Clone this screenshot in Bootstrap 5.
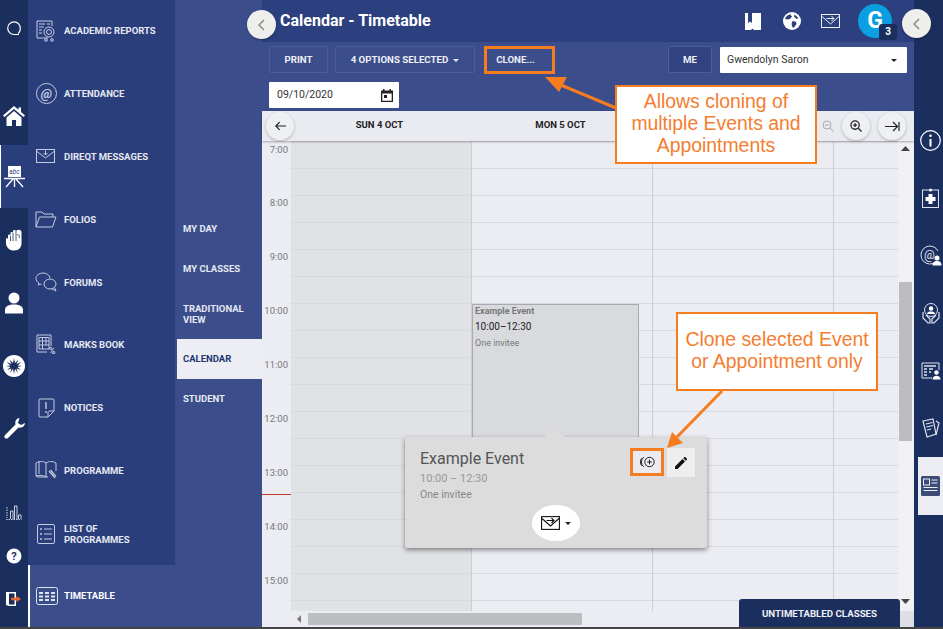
<!DOCTYPE html>
<html lang="en">
<head>
    <meta charset="UTF-8">
    <meta name="viewport" content="width=device-width, initial-scale=1.0">
    <title>Calendar - Timetable</title>
    <link href="https://cdn.jsdelivr.net/npm/bootstrap@5.3.3/dist/css/bootstrap.min.css" rel="stylesheet">
    <style>
        html, body { height: 100%; overflow: hidden; }
        body { font-family: Roboto, "Liberation Sans", sans-serif; background: #454545; }
        .app { position: relative; width: 943px; height: 627px; overflow: hidden; }

        .rail-left { width: 28px; background: #1b2f5f; }
        .rail-item { height: 63px; color: #fff; }
        .rail-item.on { background: #2b3e7c; border-left: 1px solid #fff; }
        .rail-mini { height: 43px; }
        .rail-mini.end { margin-bottom: 7px; }
        .rail-top { height: 82px; padding-bottom: 24px; }
        .rail-home { height: 63px; padding-top: 4px; }

        .side-wrap { width: 234px; }
        .menu-main { width: 147px; background: #2b3e7c; box-shadow: 2px 0 3px rgba(20, 30, 70, .25); }
        .menu-item { height: 62.8px; padding-bottom: 1px; color: #e6e9f2; font-size: 9.5px; font-weight: 700; line-height: 11px; text-transform: uppercase; }
        .menu-item.two-line { padding-bottom: 0; }
        .menu-icon { width: 36px; }
        .menu-sub { width: 87px; background: #3b4e8b; padding-top: 208px; }
        .sub-item { height: 40px; padding-left: 8px; color: #e6e9f2; font-size: 9.5px; font-weight: 700; line-height: 11px; }
        .sub-item.tall { height: 51px; }
        .sub-item.lift { padding-bottom: 2px; }
        .sub-item.on { background: #eceef4; color: #24366f; margin-left: 2px; padding-left: 6px; }
        .menu-time { height: 62px; background: #3b4e8b; border-left: 2px solid #fff; color: #fff; font-size: 9.5px; font-weight: 700; }
        .menu-time .menu-icon { width: 34px; }

        .page-main { width: 652px; background: #3b4e8b; }
        .title-bar { height: 42px; background: #2c3f7e; padding-left: 18px; padding-right: 22px; }
        .title-bar h1 { font-size: 16px; font-weight: 700; color: #fff; margin: 0; }
        .top-icon { width: 39px; }
        .avatar { position: relative; width: 34px; height: 34px; margin-left: 8px; border-radius: 50%; background: #0a9fe0; color: #fff; font-size: 23px; font-weight: 700; line-height: 34px; text-align: center; }
        .avatar-num { position: absolute; right: -5px; bottom: -2px; width: 18px; height: 16px; border-radius: 3px; background: #1b2f5f; font-size: 10px; line-height: 16px; }

        .tool-bar { height: 69px; padding: 4px 7px 0; }
        .tool-btn { flex-shrink: 0; height: 27px; width: 59px; padding: 0; border: 1px solid #4c5e98; border-radius: 2px; color: #eef0f6; font-size: 9.7px; font-weight: 700; line-height: 26px; background: transparent; }
        .tool-btn.caret-btn { width: 140px; margin-left: 7px; }
        .clone-btn { width: 71px; height: 28px; margin-left: 9px; padding-right: 8px; border: 3px solid #f57c1f; border-radius: 0; line-height: 20px; }
        .me-btn { width: 44px; margin-right: 8px; background: #30437f; }
        .caret-down { display: inline-block; margin-left: 5px; border-top: 3px solid currentColor; border-left: 3px solid transparent; border-right: 3px solid transparent; vertical-align: 1px; }
        .who-box { flex-shrink: 0; width: 187px; height: 26px; margin-top: 1px; padding: 0 10px 0 7px; background: #fff; font-size: 10.5px; color: #333; border-radius: 1px; }
        .date-box { width: 130px; height: 26px; margin-top: 8px; padding: 0 6px 0 8px; background: #fff; font-size: 10.5px; color: #333; border-radius: 1px; }

        .cal-head { height: 30px; padding-bottom: 2px; background: #e9ebf1; box-shadow: 0 1px 2px rgba(0, 0, 0, .3); font-size: 9.5px; font-weight: 700; color: #222; position: relative; z-index: 2; }
        .cal-gutter { width: 27px; }
        .cal-day { width: 181px; text-align: center; }
        .round-btn { position: absolute; top: 1px; width: 28px; height: 28px; border-radius: 50%; background: #eef0f4; box-shadow: 0 1px 3px rgba(0, 0, 0, .25); }
        .cal-body { height: 470px; position: relative; overflow: hidden; background: #ecedf3; }
        .time-col { flex-shrink: 0; width: 29px; color: #777; font-size: 9.5px; text-align: right; padding-right: 3px; }
        .time-slot { height: 54px; padding-top: 1px; }
        .time-slot:first-child { padding-top: 2px; }
        .day-col { flex-shrink: 0; width: 181px; border-right: 1px solid #ccced5; background-image: repeating-linear-gradient(to bottom, #d8d9e0 0, #d8d9e0 1px, transparent 1px, transparent 27px); position: relative; }
        .day-col.off { background-color: #e1e2e6; }
        .day-col.last { width: 64px; border-right: 0; }
        .v-scroll { flex-shrink: 0; width: 16px; background: #f1f1f3; position: relative; }
        .v-thumb { position: absolute; left: 1px; top: 141px; width: 13px; height: 159px; background: #bdbdbf; }
        .cal-event { position: absolute; left: 0; top: 163px; width: 167px; height: 160px; padding: 1px 2px; background: #d9dade; border: 1px solid #a9aab0; font-size: 9px; color: #777; }
        .cal-event b { font-weight: 700; display: block; line-height: 11px; }
        .cal-event span { display: block; color: #222; font-size: 10px; line-height: 20px; }
        .now-tick { position: absolute; left: 0; top: 353px; width: 29px; height: 1px; background: #c0392b; }
        .h-scroll { height: 16px; background: #ecedf3; padding-left: 35px; }
        .h-thumb { width: 274px; height: 12px; margin-left: 7px; background: #bdbec1; }
        .tri-left { border-right: 4px solid #777; border-top: 4px solid transparent; border-bottom: 4px solid transparent; }

        .rail-right { width: 29px; background: #1b2f5f; padding-top: 112px; }
        .rail-r-item { height: 57.5px; margin-left: 4px; }
        .rail-r-item.on { background: #eceef4; }

        .unt-tab { position: absolute; left: 739px; top: 599px; width: 161px; height: 28px; background: #1b2f5f; border-radius: 3px 3px 0 0; color: #eef0f6; font-size: 9.7px; font-weight: 700; line-height: 30px; text-align: center; }
        .unt-fill { position: absolute; left: 900px; top: 611px; width: 14px; height: 16px; background: #dedfe4; }
        .circle-back { position: absolute; z-index: 3; top: 10px; width: 29px; height: 29px; border-radius: 50%; background: #eeeeec; box-shadow: 0 1px 2px rgba(0, 0, 0, .3); }

        .pop-card { position: absolute; z-index: 3; left: 405px; top: 437px; width: 302px; height: 111px; background: #dcdcdc; border-radius: 2px; box-shadow: 0 2px 5px rgba(0, 0, 0, .45); padding: 11px 15px; color: #555; }
        .pop-card::before { content: ""; position: absolute; left: 142px; top: -7px; width: 15px; height: 15px; background: #dcdcdc; transform: rotate(45deg); }
        .pop-title { position: relative; font-size: 16px; line-height: 22px; color: #555; }
        .pop-time { font-size: 11px; line-height: 18px; color: #999; }
        .pop-invite { font-size: 10.5px; line-height: 13px; color: #888; }
        .pop-tools { position: absolute; right: 12px; top: 11px; }
        .clone-one { width: 34px; height: 28px; background: #e9ebf1; border: 3px solid #f57c1f; margin-right: 3px; }
        .edit-one { width: 28px; height: 29px; background: #eeeeee; }
        .mail-pill { position: absolute; left: 127px; top: 68px; width: 48px; height: 36px; border-radius: 50%; background: #fff; color: #222; }

        .note-box { position: absolute; z-index: 5; width: 202px; height: 79px; padding-bottom: 3px; background: #fff; border: 2px solid #f57c1f; color: #f47d30; font-family: "Liberation Sans", Arial, sans-serif; font-size: 19.4px; line-height: 22px; text-align: center; }
        .note-a { left: 615px; top: 85px; }
        .note-b { left: 676px; top: 312px; }
        .note-arrows { position: absolute; z-index: 4; left: 0; top: 0; }
    </style>
</head>
<body>
<div class="app d-flex">

    <!-- left icon rail -->
    <div class="rail-left d-flex flex-column flex-shrink-0">
        <div class="rail-item rail-top d-flex align-items-center justify-content-center">
            <svg width="16" height="16" viewBox="0 0 16 16" fill="none" stroke="#fff" stroke-width="1.2"><path d="M13 13.5H8A6.3 6.3 0 1 1 14.300 7.500C14.300 10 13.500 11.500 12 12.500"/></svg>
        </div>
        <div class="rail-item rail-home d-flex align-items-center justify-content-center">
            <svg width="22" height="20" viewBox="0 0 22 20" fill="#fff"><path d="M11 0 0 9.500 1.500 11 11 3 20.500 11 22 9.500 18 6V1.500H15.500V3.800ZM3.500 11.500V20H9V14H13V20H18.500V11.500L11 5Z"/></svg>
        </div>
        <div class="rail-item on d-flex align-items-center justify-content-center">
            <svg width="22" height="22" viewBox="0 0 22 22"><rect x="4" y="0" width="13" height="11" fill="#fff"/><text x="10.500" y="8" text-anchor="middle" font-size="6.500" font-style="italic" font-family="Roboto" fill="#2b3e7c">abc</text><path d="M0 12.500H21M10.500 13V21M9 13 2 21M12 13 19 21" stroke="#fff" stroke-width="1.300"/></svg>
        </div>
        <div class="rail-item d-flex align-items-center justify-content-center">
            <svg width="18" height="22" viewBox="0 0 18 22" fill="#fff"><path d="M1 11C.5 9 2 8 3 10V7C3 5 5 5 5.500 7V4C5.500 2.500 7.500 2.500 8 4V2C8 .5 10.500 .5 11 2L11.500 1.500C13.500 0 16 1 16.500 3V13C17 18 14 21.500 9 21.500 4.500 21.500 2 19 1 15Z"/><path d="M5.500 7V12M8 4V12M11 2V12M12 6C14 5 15 7 14 9" fill="none" stroke="#1b2f5f" stroke-width=".8"/></svg>
        </div>
        <div class="rail-item d-flex align-items-center justify-content-center">
            <svg width="18" height="22" viewBox="0 0 18 22" fill="#fff"><circle cx="9" cy="6" r="5.500"/><path d="M0 21.500V18C0 14 4 12.500 9 12.500S18 14 18 18V21.500Z"/></svg>
        </div>
        <div class="rail-item d-flex align-items-center justify-content-center">
            <svg width="22" height="22" viewBox="0 0 22 22"><circle cx="11" cy="11" r="11" fill="#fff"/><path d="M11 3 12 8 15.500 4.500 13.500 9 18.500 7 14.500 10.500 19 11 14.500 12 18 15 13.500 13.500 15 18 12 14 11 19 10 14 7 18 8.500 13.500 4 15 7.500 12 3 11 7.500 10.500 3.500 7 8.500 9 6.500 4.500 10 8Z" fill="#1b2f5f"/></svg>
        </div>
        <div class="rail-item d-flex align-items-center justify-content-center">
            <svg width="21" height="21" viewBox="0 0 21 21" fill="#fff"><path d="M15.500 0C12.500.2 10.500 3 11.500 6.500L.8 17.200C-.5 19.500 1.500 21.500 3.800 20.200L14.500 9.500C18 10.500 21 8 21 5L17 7 14 5Z"/></svg>
        </div>
        <div class="mt-auto"></div>
        <div class="rail-mini d-flex align-items-center justify-content-center">
            <svg width="16" height="15" viewBox="0 0 16 15" fill="none" stroke="#dfe3ee" stroke-width=".9"><path d="M0 14.500H15.500M1 2V13" stroke-dasharray="1.500 1"/><path d="M4.500 14V6H7V14M8.500 14V1H11V14M12.500 14V10H15V14"/></svg>
        </div>
        <div class="rail-mini d-flex align-items-center justify-content-center">
            <svg width="16" height="16" viewBox="0 0 16 16"><circle cx="8" cy="8" r="7.500" fill="#fff"/><text x="8" y="12" text-anchor="middle" font-size="11" font-weight="700" font-family="Roboto" fill="#1b2f5f">?</text></svg>
        </div>
        <div class="rail-mini end d-flex align-items-center justify-content-center">
            <svg width="16" height="16" viewBox="0 0 16 16"><path d="M0 1H10V15H3L0 14Z" fill="#fff"/><rect x="3" y="2.500" width="5.500" height="11" fill="#1b2f5f"/><path d="M5 6.800H10.500V5L15 8 10.500 11V9.200H5Z" fill="#e8662a"/></svg>
        </div>
    </div>

    <!-- menus -->
    <div class="side-wrap d-flex flex-column flex-shrink-0">
        <div class="d-flex flex-grow-1">
            <div class="menu-main">
                <div class="menu-item d-flex align-items-center">
                    <div class="menu-icon d-flex justify-content-center">
                        <svg width="21" height="22" viewBox="0 0 21 22" fill="none" stroke="#c4cbdf"><path d="M12 18H1V1H16V6"/><path d="M3 4H9M11 4H14M3 7H8M3 10H6M3 13H6"/><circle cx="13" cy="12" r="5"/><circle cx="13" cy="12" r="2.500"/><circle cx="10" cy="20" r="1.300"/><circle cx="16" cy="20" r="1.300"/></svg>
                    </div>
                    <span>Academic Reports</span>
                </div>
                <div class="menu-item d-flex align-items-center">
                    <div class="menu-icon d-flex justify-content-center">
                        <svg width="21" height="21" viewBox="0 0 21 21" fill="none" stroke="#c4cbdf"><circle cx="10.500" cy="10.500" r="10"/><text x="10.500" y="15" text-anchor="middle" font-size="13" font-style="italic" font-family="Roboto" fill="#c4cbdf" stroke="none">@</text></svg>
                    </div>
                    <span>Attendance</span>
                </div>
                <div class="menu-item d-flex align-items-center">
                    <div class="menu-icon d-flex justify-content-center">
                        <svg width="20" height="15" viewBox="0 0 20 15" fill="none" stroke="#c4cbdf"><rect x=".5" y=".5" width="18" height="13"/><path d="M1 2.500 9.500 9 18 2.500M9.500 1.500V6M7.500 4 9.500 6 11.500 4"/></svg>
                    </div>
                    <span>Direqt Messages</span>
                </div>
                <div class="menu-item d-flex align-items-center">
                    <div class="menu-icon d-flex justify-content-center">
                        <svg width="22" height="17" viewBox="0 0 22 17" fill="none" stroke="#c4cbdf"><path d="M1 16V1H7L9 3H18V6"/><path d="M1 16 4.500 6H21L17.500 16Z"/></svg>
                    </div>
                    <span>Folios</span>
                </div>
                <div class="menu-item d-flex align-items-center">
                    <div class="menu-icon d-flex justify-content-center">
                        <svg width="22" height="20" viewBox="0 0 22 20" fill="none" stroke="#c4cbdf"><path d="M8 1C4 1 1 3.500 1 6.500 1 8.500 2 10 4 11L3 13 6.500 12"/><path d="M8 1C11.500 1 14.500 3 15 6"/><ellipse cx="15" cy="12" rx="6" ry="5"/><path d="M17 17 21 19 19.500 15.500"/></svg>
                    </div>
                    <span>Forums</span>
                </div>
                <div class="menu-item d-flex align-items-center">
                    <div class="menu-icon d-flex justify-content-center">
                        <svg width="21" height="21" viewBox="0 0 21 21" fill="none" stroke="#c4cbdf"><path d="M15 12V1H1V18H11"/><path d="M3 3.500H13V15H3ZM3 7H13M3 11H13M6.500 3.500V15M10 3.500V11"/><text x="16" y="20" text-anchor="middle" font-size="9" font-family="Roboto" font-weight="700" fill="#c4cbdf" stroke="none">%</text></svg>
                    </div>
                    <span>Marks Book</span>
                </div>
                <div class="menu-item d-flex align-items-center">
                    <div class="menu-icon d-flex justify-content-center">
                        <svg width="17" height="20" viewBox="0 0 17 20" fill="none" stroke="#c4cbdf"><path d="M10 19H2C1.200 19 1 18.500 1 18V2C1 1.200 1.500 1 2 1H15C15.700 1 16 1.500 16 2V13L10 19V14.500C10 13.500 11 13 12 13H16"/><path d="M8 4V11M8 13V15" stroke-width="1.400"/></svg>
                    </div>
                    <span>Notices</span>
                </div>
                <div class="menu-item d-flex align-items-center">
                    <div class="menu-icon d-flex justify-content-center">
                        <svg width="22" height="20" viewBox="0 0 22 20" fill="none" stroke="#c4cbdf"><path d="M11 17C8 15 5 15 1 16V3C5 1 8 1 11 3 14 1 17 1 21 3V11"/><path d="M11 3V17M4 1V14M1 16 3 17H13"/><path d="M14 11 20 18M15.500 10 21 16.500" stroke-width="1.200"/></svg>
                    </div>
                    <span>Programme</span>
                </div>
                <div class="menu-item two-line d-flex align-items-center">
                    <div class="menu-icon d-flex justify-content-center">
                        <svg width="18" height="20" viewBox="0 0 18 20" fill="none" stroke="#c4cbdf"><rect x=".5" y=".5" width="17" height="19" rx="1.500"/><path d="M7 5H15M7 10H15M7 15H15"/><path d="M3 5H5M3 10H5M3 15H5" stroke-width="1.500"/></svg>
                    </div>
                    <span>List of<br>Programmes</span>
                </div>
            </div>
            <div class="menu-sub flex-grow-1">
                <div class="sub-item d-flex align-items-center">MY DAY</div>
                <div class="sub-item d-flex align-items-center">MY CLASSES</div>
                <div class="sub-item tall d-flex align-items-center">TRADITIONAL<br>VIEW</div>
                <div class="sub-item lift on d-flex align-items-center">CALENDAR</div>
                <div class="sub-item lift d-flex align-items-center">STUDENT</div>
            </div>
        </div>
        <div class="menu-time d-flex align-items-center">
            <div class="menu-icon d-flex justify-content-center">
                <svg width="22" height="18" viewBox="0 0 22 18" fill="none" stroke="#dfe3ee"><rect x=".5" y=".5" width="21" height="17" rx="2"/><path d="M3 6H7M9 6H13M15 6H19M3 9.500H7M9 9.500H13M15 9.500H19M3 13H7M9 13H13M15 13H19" stroke-width="2"/></svg>
            </div>
            <span>TIMETABLE</span>
        </div>
    </div>

    <!-- page -->
    <div class="page-main d-flex flex-column flex-shrink-0">
        <div class="title-bar d-flex align-items-center">
            <h1>Calendar - Timetable</h1>
            <div class="top-icon d-flex justify-content-center ms-auto">
                <svg width="16" height="17" viewBox="0 0 16 17" fill="#fff"><path d="M0 0H16V17H9L7.500 15.500 6 17H0ZM3 0V10L5 8.500 7 10V0Z" fill-rule="evenodd"/></svg>
            </div>
            <div class="top-icon d-flex justify-content-center">
                <svg width="18" height="18" viewBox="0 0 18 18"><circle cx="9" cy="9" r="9" fill="#fff"/><path d="M7 2.200 9 4.500 7 7 3.500 7.500 2 6.500C3 4.500 5 2.800 7 2.200ZM9.500 9 13 9.800 13.500 12 11 15.500H9.500L8.500 12ZM11.500 2.500 15.500 6 13.500 7 11 4.500Z" fill="#2c3f7e"/></svg>
            </div>
            <div class="top-icon d-flex justify-content-center">
                <svg width="19" height="14" viewBox="0 0 19 14" fill="none" stroke="#eef0f6"><rect x=".5" y=".5" width="18" height="13"/><path d="M1 2.500 9.500 10 18 2.500M5.500 4.500H13M10.500 2 13 4.500 10.500 7"/></svg>
            </div>
            <div class="avatar">G<div class="avatar-num">3</div></div>
        </div>
        <div class="tool-bar">
            <div class="d-flex">
                <button type="button" class="btn tool-btn">PRINT</button>
                <button type="button" class="btn tool-btn caret-btn">4 OPTIONS SELECTED<span class="caret-down"></span></button>
                <button type="button" class="btn tool-btn clone-btn">CLONE...</button>
                <button type="button" class="btn tool-btn me-btn ms-auto">ME</button>
                <div class="who-box d-flex align-items-center justify-content-between">Gwendolyn Saron<span class="caret-down text-dark"></span></div>
            </div>
            <div class="date-box d-flex align-items-center justify-content-between">09/10/2020
                <svg width="12" height="13" viewBox="0 0 12 13" fill="#222"><path d="M2 0H3.500V1.500H8.500V0H10V1.500H12V13H0V1.500H2ZM1.300 4.500V11.700H10.700V4.500Z" fill-rule="evenodd"/><rect x="3" y="6" width="3" height="3"/></svg>
            </div>
        </div>
        <div class="cal-head d-flex align-items-center">
            <div class="cal-gutter"></div>
            <div class="cal-day">SUN 4 OCT</div>
            <div class="cal-day">MON 5 OCT</div>
            <div class="round-btn d-flex align-items-center justify-content-center" style="left:4px">
                <svg width="11" height="10" viewBox="0 0 13 11" fill="none" stroke="#222" stroke-width="1.400"><path d="M13 5.500H1M5.500 1 1 5.500 5.500 10"/></svg>
            </div>
            <svg class="position-absolute" style="left:560px;top:9px" width="12" height="12" viewBox="0 0 12 12" fill="none" stroke="#aaa"><circle cx="5" cy="5" r="4"/><path d="M3 5H7M8 8 11.500 11.500" /></svg>
            <div class="round-btn d-flex align-items-center justify-content-center" style="left:580px">
                <svg width="12" height="12" viewBox="0 0 13 13" fill="none" stroke="#222" stroke-width="1.400"><circle cx="5.500" cy="5.500" r="4.500"/><path d="M3.500 5.500H7.500M5.500 3.500V7.500M9 9 12.500 12.500"/></svg>
            </div>
            <div class="round-btn d-flex align-items-center justify-content-center" style="left:616px">
                <svg width="15" height="11" viewBox="0 0 15 11" fill="none" stroke="#222" stroke-width="1.200"><path d="M0 5.500H12M8 1 12.500 5.500 8 10M14 1V10"/></svg>
            </div>
        </div>
        <div class="cal-body d-flex">
            <div class="time-col">
                <div class="time-slot">7:00</div><div class="time-slot">8:00</div><div class="time-slot">9:00</div><div class="time-slot">10:00</div><div class="time-slot">11:00</div><div class="time-slot">12:00</div><div class="time-slot">13:00</div><div class="time-slot">14:00</div><div class="time-slot">15:00</div>
            </div>
            <div class="day-col off"></div>
            <div class="day-col">
                <div class="cal-event"><b>Example Event</b><span>10:00–12:30</span>One invitee</div>
            </div>
            <div class="day-col"></div>
            <div class="day-col last"></div>
            <div class="v-scroll">
                <svg class="position-absolute" style="left:3px;top:5px" width="9" height="5" viewBox="0 0 9 5"><path d="M0 5 4.500 0 9 5Z" fill="#444"/></svg>
                <div class="v-thumb"></div>
                <svg class="position-absolute" style="left:3px;bottom:7px" width="9" height="5" viewBox="0 0 9 5"><path d="M0 0 4.500 5 9 0Z" fill="#444"/></svg>
            </div>
            <div class="now-tick"></div>
        </div>
        <div class="h-scroll d-flex align-items-center">
            <div class="tri-left"></div>
            <div class="h-thumb"></div>
        </div>
    </div>

    <!-- right icon rail -->
    <div class="rail-right flex-shrink-0">
        <div class="rail-r-item d-flex align-items-center justify-content-center">
            <svg width="21" height="21" viewBox="0 0 21 21" fill="none" stroke="#fff" stroke-width="1.200"><circle cx="10.500" cy="10.500" r="9.800"/><path d="M10.500 9V16.500" stroke-width="2"/><circle cx="10.500" cy="5.800" r="1.300" fill="#fff" stroke="none"/></svg>
        </div>
        <div class="rail-r-item d-flex align-items-center justify-content-center">
            <svg width="17" height="20" viewBox="0 0 17 20"><rect x=".5" y="2" width="16" height="17.500" fill="none" stroke="#dfe3ee"/><circle cx="8.500" cy="2" r="1.500" fill="#fff"/><path d="M6.500 6H10.500V9H13.500V13H10.500V16H6.500V13H3.500V9H6.500Z" fill="#fff"/></svg>
        </div>
        <div class="rail-r-item d-flex align-items-center justify-content-center">
            <svg width="22" height="21" viewBox="0 0 22 21"><path d="M13 18.500A9 9 0 1 1 18 6" fill="none" stroke="#dfe3ee"/><text x="9.500" y="14" text-anchor="middle" font-size="12" font-family="Roboto" fill="#dfe3ee">@</text><circle cx="17" cy="13" r="2.500" fill="#fff"/><path d="M12.500 20.500C12.500 17 14.500 16 17 16S21.500 17 21.500 20.500Z" fill="#fff"/></svg>
        </div>
        <div class="rail-r-item d-flex align-items-center justify-content-center">
            <svg width="18" height="21" viewBox="0 0 18 21" fill="none" stroke="#dfe3ee"><circle cx="9" cy="7" r="6.500"/><circle cx="9" cy="5.500" r="2.200" fill="#fff" stroke="none"/><path d="M5 11C5 9 7 8.500 9 8.500S13 9 13 11Z" fill="#fff" stroke="none"/><path d="M1 9V15L6 20H8V16L4 12M17 9V15L12 20H10V16L14 12" stroke-width="1.200"/></svg>
        </div>
        <div class="rail-r-item d-flex align-items-center justify-content-center">
            <svg width="20" height="18" viewBox="0 0 20 18" fill="none" stroke="#dfe3ee"><path d="M11 16H1V1H18V8"/><path d="M3 4H15M3 7H6M8 7H12M3 10H6M8 10H10M3 13H6" stroke-width="1.300"/><circle cx="15.500" cy="10.500" r="2.200" fill="#fff" stroke="none"/><path d="M11.500 17.500C11.500 15 13.500 13.800 15.500 13.800S19.500 15 19.500 17.500Z" fill="#fff" stroke="none"/></svg>
        </div>
        <div class="rail-r-item d-flex align-items-center justify-content-center">
            <svg width="18" height="20" viewBox="0 0 18 20" fill="none" stroke="#dfe3ee"><path d="M1 3 11 1 14 16 5 19Z" stroke-width="1.200"/><path d="M14 3 17 5 14 17M4 6 10.500 4.500M4.500 9 11 7.500M5 12 9 11" stroke-width="1.200"/></svg>
        </div>
        <div class="rail-r-item on d-flex align-items-center justify-content-center">
            <svg width="19" height="20" viewBox="0 0 19 20"><rect x="0" y="0" width="19" height="20" rx="1.500" fill="#3b4c78"/><rect x="2.500" y="3" width="6" height="6" fill="none" stroke="#eceef4"/><path d="M10.500 4H16.500M10.500 7H16.500M2.500 11.500H16.500M2.500 14.500H16.500" stroke="#eceef4"/></svg>
        </div>
    </div>

    <!-- things lying over the page -->
    <div class="circle-back d-flex align-items-center justify-content-center" style="left:247px">
        <svg width="7" height="12" viewBox="0 0 7 12" fill="none" stroke="#888" stroke-width="1.500"><path d="M6 1 1 6 6 11"/></svg>
    </div>
    <div class="circle-back d-flex align-items-center justify-content-center" style="left:902px;top:9px">
        <svg width="7" height="12" viewBox="0 0 7 12" fill="none" stroke="#888" stroke-width="1.500"><path d="M6 1 1 6 6 11"/></svg>
    </div>

    <div class="pop-card">
        <div class="pop-title">Example Event</div>
        <div class="pop-time">10:00 – 12:30</div>
        <div class="pop-invite">One invitee</div>
        <div class="pop-tools d-flex align-items-start">
            <div class="clone-one d-flex align-items-center justify-content-center">
                <svg width="15" height="12" viewBox="0 0 15 12" fill="none" stroke="#222" stroke-width="1"><circle cx="9.500" cy="6" r="4.700"/><path d="M9.500 3.700V8.300M7.200 6H11.800M3.800 1.200A6 6 0 0 0 3.800 10.800M1.800 2.200A6 6 0 0 0 1.800 9.800"/></svg>
            </div>
            <div class="edit-one d-flex align-items-center justify-content-center">
                <svg width="12" height="12" viewBox="0 0 12 12" fill="#111"><path d="M0 12V9.500L7.500 2 10 4.500 2.500 12ZM8.300 1.200 9.200.3C9.600-.1 10-.1 10.400.3L11.700 1.600C12.100 2 12.100 2.400 11.700 2.800L10.800 3.700Z"/></svg>
            </div>
        </div>
        <div class="mail-pill d-flex align-items-center justify-content-center">
            <svg width="19" height="14" viewBox="0 0 19 14" fill="none" stroke="#111" stroke-width="1.100"><rect x=".6" y=".6" width="17.800" height="12.800"/><path d="M1 2.500 9.500 10 18 2.500M5.500 4.500H13M10.500 2 13 4.500 10.500 7"/></svg>
            <span class="caret-down"></span>
        </div>
    </div>

    <div class="unt-fill"></div>
    <div class="unt-tab">UNTIMETABLED CLASSES</div>

    <svg class="note-arrows" width="943" height="627" viewBox="0 0 943 627">
        <path d="M616 108 556 83" stroke="#f57c1f" stroke-width="3" fill="none"/>
        <path d="M545 77 567 77 559 92Z" fill="#f57c1f"/>
        <path d="M722 391 677 437" stroke="#f57c1f" stroke-width="3" fill="none"/>
        <path d="M667 448 672 432 683 443Z" fill="#f57c1f"/>
    </svg>

    <div class="note-box note-a d-flex align-items-center justify-content-center">Allows cloning of<br>multiple Events and<br>Appointments</div>
    <div class="note-box note-b d-flex align-items-center justify-content-center">Clone selected Event<br>or Appointment only</div>
</div>
</body>
</html>
